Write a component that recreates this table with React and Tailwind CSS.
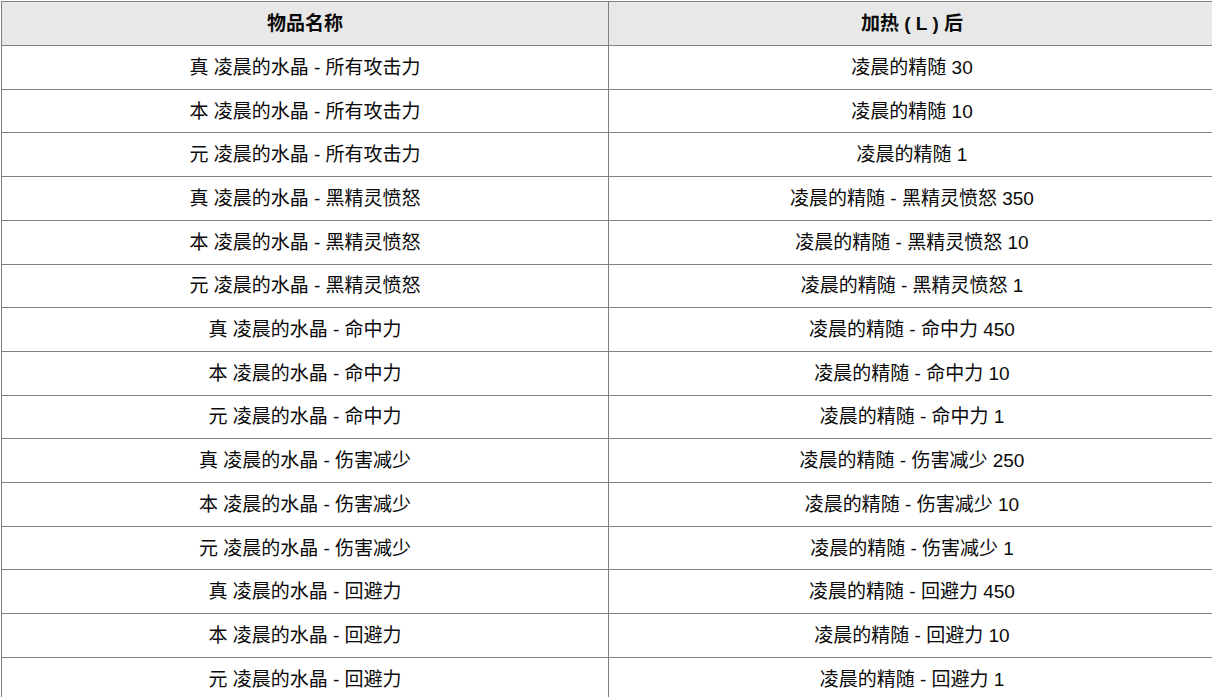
import React from "react";

const rows = [
  ["真 凌晨的水晶 - 所有攻击力", "凌晨的精随 30"],
  ["本 凌晨的水晶 - 所有攻击力", "凌晨的精随 10"],
  ["元 凌晨的水晶 - 所有攻击力", "凌晨的精随 1"],
  ["真 凌晨的水晶 - 黑精灵愤怒", "凌晨的精随 - 黑精灵愤怒 350"],
  ["本 凌晨的水晶 - 黑精灵愤怒", "凌晨的精随 - 黑精灵愤怒 10"],
  ["元 凌晨的水晶 - 黑精灵愤怒", "凌晨的精随 - 黑精灵愤怒 1"],
  ["真 凌晨的水晶 - 命中力", "凌晨的精随 - 命中力 450"],
  ["本 凌晨的水晶 - 命中力", "凌晨的精随 - 命中力 10"],
  ["元 凌晨的水晶 - 命中力", "凌晨的精随 - 命中力 1"],
  ["真 凌晨的水晶 - 伤害减少", "凌晨的精随 - 伤害减少 250"],
  ["本 凌晨的水晶 - 伤害减少", "凌晨的精随 - 伤害减少 10"],
  ["元 凌晨的水晶 - 伤害减少", "凌晨的精随 - 伤害减少 1"],
  ["真 凌晨的水晶 - 回避力", "凌晨的精随 - 回避力 450"],
  ["本 凌晨的水晶 - 回避力", "凌晨的精随 - 回避力 10"],
  ["元 凌晨的水晶 - 回避力", "凌晨的精随 - 回避力 1"],
];

export default function App() {
  return (
    <div
      className="w-[1212px] h-[697px] overflow-hidden bg-white text-[19px] leading-none text-[#0a0a0a]"
      style={{ fontFamily: '"Liberation Sans", "Noto Sans CJK SC", sans-serif' }}
    >
      <div className="ml-px mt-px w-[1215px] border-l border-t border-[#808080]">
        <div className="flex h-[44px] bg-[#e8e8e8] font-bold">
          <div className="w-[607px] shrink-0 border-r border-b border-[#808080] flex items-center justify-center">
            物品名称
          </div>
          <div className="flex-1 border-r border-b border-[#808080] flex items-center justify-center">
            加热 ( L ) 后
          </div>
        </div>
        {rows.map((r, i) => (
          <div key={i} className="flex h-[43.71px]">
            <div className="w-[607px] shrink-0 border-r border-b border-[#808080] flex items-center justify-center">
              {r[0]}
            </div>
            <div className="flex-1 border-r border-b border-[#808080] flex items-center justify-center">
              {r[1]}
            </div>
          </div>
        ))}
      </div>
    </div>
  );
}
